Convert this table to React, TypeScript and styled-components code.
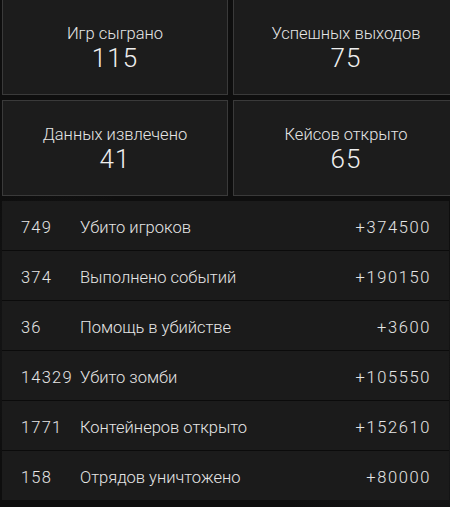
import React from "react";
import styled, { createGlobalStyle } from "styled-components";

const Global = createGlobalStyle`
  html, body {
    margin: 0;
    padding: 0;
    width: 450px;
    height: 507px;
    overflow: hidden;
    background: #0e0e0e;
  }
  body {
    background:
      radial-gradient(ellipse 160px 220px at 60px 330px, rgba(70,72,78,0.18), transparent 70%),
      radial-gradient(ellipse 200px 160px at 420px 460px, rgba(60,62,68,0.2), transparent 70%),
      radial-gradient(ellipse 120px 120px at 440px 320px, rgba(80,80,80,0.12), transparent 70%),
      #0e0e0e;
    font-family: Roboto, "Liberation Sans", sans-serif;
    font-weight: 300;
    color: #e2e2e2;
  }
`;

const Page = styled.div`
  display: flex;
  flex-direction: column;
  gap: 5px;
  margin-top: -1px;
  padding-left: 2px;
  width: 461px;
`;

const CardGrid = styled.div`
  display: grid;
  grid-template-columns: 226px 226px;
  grid-auto-rows: 96px;
  gap: 5px;
`;

const Card = styled.div`
  box-sizing: border-box;
  border: 1px solid #3a3a3a;
  background: #1c1c1c;
  display: flex;
  flex-direction: column;
  align-items: center;
  justify-content: center;
  gap: 0;
  padding-top: 2px;
`;

const CardLabel = styled.div`
  font-size: 16.5px;
  line-height: 20px;
  color: #e6e6e6;
`;

const CardValue = styled.div`
  font-size: 26px;
  line-height: 28px;
  color: #efefef;
  letter-spacing: 1px;
`;

const List = styled.div`
  width: 447px;
  display: flex;
  flex-direction: column;
  background: #0b0b0b;
  gap: 1px;
`;

const Row = styled.div`
  box-sizing: border-box;
  height: 49px;
  display: grid;
  grid-template-columns: 59px 1fr auto;
  align-items: center;
  padding: 3px 19px 0 19px;
  background: #1b1b1b;
  font-size: 16.5px;
  color: #e6e6e6;
`;

const Count = styled.span`
  letter-spacing: 1.2px;
`;
const Label = styled.span``;
const Points = styled.span`
  text-align: right;
  letter-spacing: 1.6px;
  margin-right: -1px;
`;

const cards = [
  { label: "Игр сыграно", value: "115" },
  { label: "Успешных выходов", value: "75" },
  { label: "Данных извлечено", value: "41" },
  { label: "Кейсов открыто", value: "65" },
];

const rows = [
  { count: "749", label: "Убито игроков", points: "+374500" },
  { count: "374", label: "Выполнено событий", points: "+190150" },
  { count: "36", label: "Помощь в убийстве", points: "+3600" },
  { count: "14329", label: "Убито зомби", points: "+105550" },
  { count: "1771", label: "Контейнеров открыто", points: "+152610" },
  { count: "158", label: "Отрядов уничтожено", points: "+80000" },
];

export default function App() {
  return (
    <>
      <Global />
      <Page>
        <CardGrid>
          {cards.map((c) => (
            <Card key={c.label}>
              <CardLabel>{c.label}</CardLabel>
              <CardValue>{c.value}</CardValue>
            </Card>
          ))}
        </CardGrid>
        <List>
          {rows.map((r) => (
            <Row key={r.label}>
              <Count>{r.count}</Count>
              <Label>{r.label}</Label>
              <Points>{r.points}</Points>
            </Row>
          ))}
        </List>
      </Page>
    </>
  );
}
